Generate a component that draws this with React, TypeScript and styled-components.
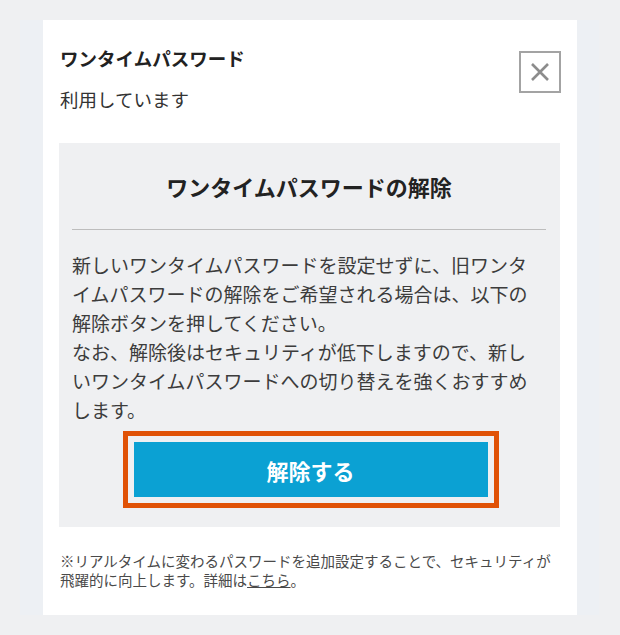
import styled, { createGlobalStyle } from "styled-components";

const GlobalStyle = createGlobalStyle`
  body {
    margin: 0;
    background-color: #eff0f2;
    font-family: "Noto Sans CJK JP", "Noto Sans", sans-serif;
  }
`;

/**
 * ワンタイムパスワード 解除パネル
 */
export default function App() {
  return (
    <>
      <GlobalStyle />
      <Page>
        <Frame>
          <Card>
            <Header>
              <div>
                <Title>ワンタイムパスワード</Title>
                <Status>利用しています</Status>
              </div>
              <CloseButton aria-label="閉じる">
                <svg width="22" height="22" viewBox="0 0 22 22">
                  <path
                    d="M3 3 L19 19 M19 3 L3 19"
                    stroke="#8c8c8c"
                    strokeWidth="2.6"
                    fill="none"
                  />
                </svg>
              </CloseButton>
            </Header>

            <Panel>
              <PanelTitle>ワンタイムパスワードの解除</PanelTitle>
              <Divider />
              <Body>
                新しいワンタイムパスワードを設定せずに、旧ワンタイムパスワードの解除をご希望される場合は、以下の解除ボタンを押してください。
                <br />
                なお、解除後はセキュリティが低下しますので、新しいワンタイムパスワードへの切り替えを強くおすすめします。
              </Body>
              <FocusRing>
                <ReleaseButton>解除する</ReleaseButton>
              </FocusRing>
            </Panel>

            <Note>
              ※リアルタイムに変わるパスワードを追加設定することで、セキュリティが
              <br />
              飛躍的に向上します。詳細は<a href="#">こちら</a>。
            </Note>
          </Card>
        </Frame>
      </Page>
    </>
  );
}

const Page = styled.div`
  padding: 20px;
  width: 579px;
`;

const Frame = styled.div`
  background-color: #edf0f4;
  height: 595px;
  padding-left: 23px;
`;

const Card = styled.div`
  background-color: #ffffff;
  width: 534px;
  height: 595px;
  box-sizing: border-box;
  padding: 26px 16px 0 17px;
`;

const Header = styled.div`
  display: flex;
  justify-content: space-between;
  align-items: flex-start;
`;

const Title = styled.h1`
  margin: 0;
  font-size: 18.5px;
  line-height: 24px;
  font-weight: 700;
  color: #222222;
`;

const Status = styled.p`
  margin: 16px 0 0;
  font-size: 18.5px;
  line-height: 26px;
  color: #333333;
`;

const CloseButton = styled.button`
  margin-top: 5px;
  width: 42px;
  height: 42px;
  box-sizing: border-box;
  border: 2px solid #a3a3a3;
  background: #ffffff;
  padding: 0;
  display: flex;
  align-items: center;
  justify-content: center;
  cursor: pointer;
`;

const Panel = styled.section`
  background-color: #eff0f2;
  width: 501px;
  margin: 31px 0 0 -1px;
  box-sizing: border-box;
  padding: 28px 14px 19px 13px;
  display: flex;
  flex-direction: column;
  align-items: center;
`;

const PanelTitle = styled.h2`
  margin: 0;
  font-size: 22px;
  line-height: 30px;
  font-weight: 700;
  color: #222222;
`;

const Divider = styled.hr`
  align-self: stretch;
  margin: 28px 0 0;
  border: none;
  border-top: 1px solid #bdbdbd;
`;

const Body = styled.p`
  align-self: stretch;
  margin: 20px 10px 0 0;
  font-size: 19px;
  line-height: 29px;
  color: #3c3c3c;
`;

const FocusRing = styled.div`
  margin-top: 7px;
  margin-left: 3px;
  border: 5px solid #e05206;
  padding: 6px;
`;

const ReleaseButton = styled.button`
  display: block;
  width: 354px;
  height: 55px;
  border: none;
  background-color: #0ba1d3;
  color: #ffffff;
  font-family: inherit;
  font-size: 22px;
  font-weight: 700;
  cursor: pointer;
`;

const Note = styled.p`
  margin: 24px 0 0;
  font-size: 14.5px;
  line-height: 19px;
  color: #4a4a4a;
  white-space: nowrap;

  a {
    color: #4a4a4a;
    text-decoration: underline;
  }
`;
